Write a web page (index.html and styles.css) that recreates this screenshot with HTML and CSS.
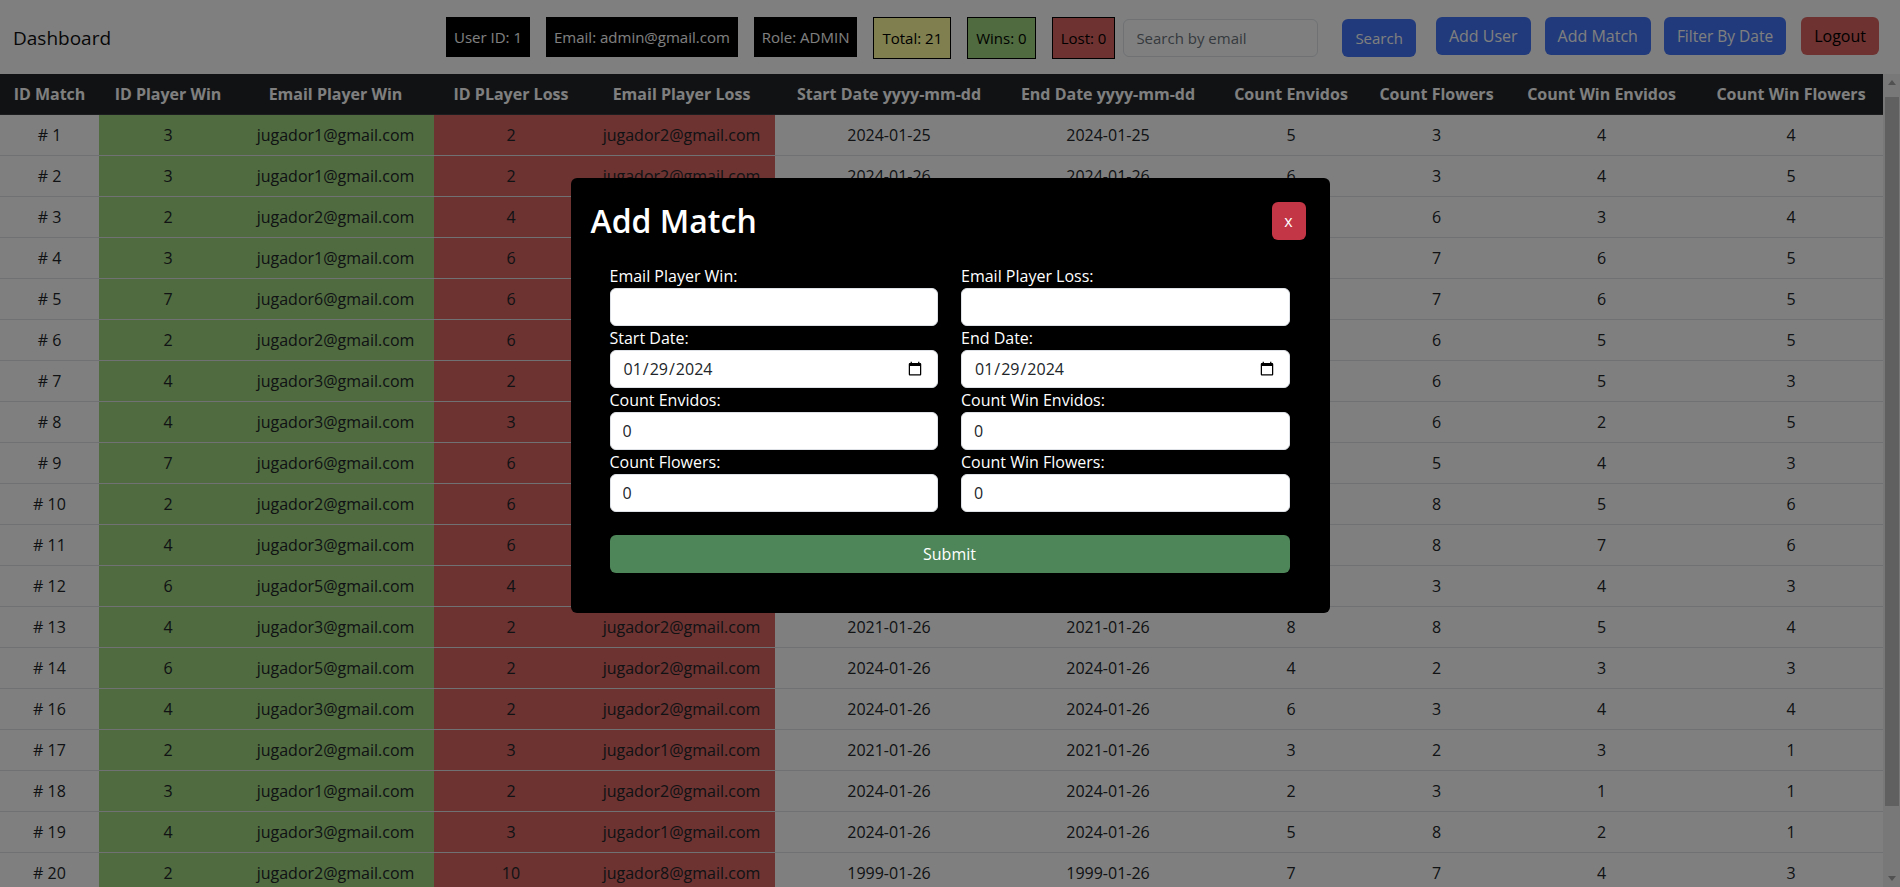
FILE: index.html
```html
<!DOCTYPE html>
<html lang="en">
<head>
<meta charset="utf-8">
<title>Dashboard</title>
<link rel="stylesheet" href="styles.css">
</head>
<body>
<div class="app">
  <nav class="navbar">
    <span class="brand">Dashboard</span>
    <div class="nav-right">
      <span class="tag tag-dark">User ID: 1</span>
      <span class="tag tag-dark">Email: admin@gmail.com</span>
      <span class="tag tag-dark">Role: ADMIN</span>
      <span class="tag tag-total">Total: 21</span>
      <span class="tag tag-win">Wins: 0</span>
      <span class="tag tag-loss">Lost: 0</span>
      <form class="search">
        <input class="search-input" type="text" placeholder="Search by email">
        <button class="btn btn-blue btn-search" type="button">Search</button>
      </form>
      <button class="btn btn-blue btn-adduser" type="button">Add User</button>
      <button class="btn btn-blue btn-addmatch" type="button">Add Match</button>
      <button class="btn btn-blue btn-filter" type="button">Filter By Date</button>
      <button class="btn btn-logout" type="button">Logout</button>
    </div>
  </nav>

  <div class="main">
    <div class="table-wrap">
      <table class="matches">
        <colgroup>
          <col class="c1"><col class="c2"><col class="c3"><col class="c4"><col class="c5"><col class="c6"><col class="c7"><col class="c8"><col class="c9"><col class="c10"><col class="c11">
        </colgroup>
        <thead>
          <tr>
            <th>ID Match</th><th>ID Player Win</th><th>Email Player Win</th><th>ID PLayer Loss</th><th>Email Player Loss</th><th>Start Date yyyy-mm-dd</th><th>End Date yyyy-mm-dd</th><th>Count Envidos</th><th>Count Flowers</th><th>Count Win Envidos</th><th>Count Win Flowers</th>
          </tr>
        </thead>
        <tbody>
          <tr><td># 1</td><td class="win">3</td><td class="win">jugador1@gmail.com</td><td class="loss">2</td><td class="loss">jugador2@gmail.com</td><td>2024-01-25</td><td>2024-01-25</td><td>5</td><td>3</td><td>4</td><td>4</td></tr>
          <tr><td># 2</td><td class="win">3</td><td class="win">jugador1@gmail.com</td><td class="loss">2</td><td class="loss">jugador2@gmail.com</td><td>2024-01-26</td><td>2024-01-26</td><td>6</td><td>3</td><td>4</td><td>5</td></tr>
          <tr><td># 3</td><td class="win">2</td><td class="win">jugador2@gmail.com</td><td class="loss">4</td><td class="loss">jugador3@gmail.com</td><td>2024-01-26</td><td>2024-01-26</td><td>5</td><td>6</td><td>3</td><td>4</td></tr>
          <tr><td># 4</td><td class="win">3</td><td class="win">jugador1@gmail.com</td><td class="loss">6</td><td class="loss">jugador5@gmail.com</td><td>2024-01-26</td><td>2024-01-26</td><td>8</td><td>7</td><td>6</td><td>5</td></tr>
          <tr><td># 5</td><td class="win">7</td><td class="win">jugador6@gmail.com</td><td class="loss">6</td><td class="loss">jugador5@gmail.com</td><td>2024-01-26</td><td>2024-01-26</td><td>7</td><td>7</td><td>6</td><td>5</td></tr>
          <tr><td># 6</td><td class="win">2</td><td class="win">jugador2@gmail.com</td><td class="loss">6</td><td class="loss">jugador5@gmail.com</td><td>2024-01-26</td><td>2024-01-26</td><td>6</td><td>6</td><td>5</td><td>5</td></tr>
          <tr><td># 7</td><td class="win">4</td><td class="win">jugador3@gmail.com</td><td class="loss">2</td><td class="loss">jugador2@gmail.com</td><td>2024-01-26</td><td>2024-01-26</td><td>6</td><td>6</td><td>5</td><td>3</td></tr>
          <tr><td># 8</td><td class="win">4</td><td class="win">jugador3@gmail.com</td><td class="loss">3</td><td class="loss">jugador1@gmail.com</td><td>2024-01-26</td><td>2024-01-26</td><td>5</td><td>6</td><td>2</td><td>5</td></tr>
          <tr><td># 9</td><td class="win">7</td><td class="win">jugador6@gmail.com</td><td class="loss">6</td><td class="loss">jugador5@gmail.com</td><td>2024-01-26</td><td>2024-01-26</td><td>4</td><td>5</td><td>4</td><td>3</td></tr>
          <tr><td># 10</td><td class="win">2</td><td class="win">jugador2@gmail.com</td><td class="loss">6</td><td class="loss">jugador5@gmail.com</td><td>2024-01-26</td><td>2024-01-26</td><td>7</td><td>8</td><td>5</td><td>6</td></tr>
          <tr><td># 11</td><td class="win">4</td><td class="win">jugador3@gmail.com</td><td class="loss">6</td><td class="loss">jugador5@gmail.com</td><td>2024-01-26</td><td>2024-01-26</td><td>8</td><td>8</td><td>7</td><td>6</td></tr>
          <tr><td># 12</td><td class="win">6</td><td class="win">jugador5@gmail.com</td><td class="loss">4</td><td class="loss">jugador3@gmail.com</td><td>2024-01-26</td><td>2024-01-26</td><td>4</td><td>3</td><td>4</td><td>3</td></tr>
          <tr><td># 13</td><td class="win">4</td><td class="win">jugador3@gmail.com</td><td class="loss">2</td><td class="loss">jugador2@gmail.com</td><td>2021-01-26</td><td>2021-01-26</td><td>8</td><td>8</td><td>5</td><td>4</td></tr>
          <tr><td># 14</td><td class="win">6</td><td class="win">jugador5@gmail.com</td><td class="loss">2</td><td class="loss">jugador2@gmail.com</td><td>2024-01-26</td><td>2024-01-26</td><td>4</td><td>2</td><td>3</td><td>3</td></tr>
          <tr><td># 16</td><td class="win">4</td><td class="win">jugador3@gmail.com</td><td class="loss">2</td><td class="loss">jugador2@gmail.com</td><td>2024-01-26</td><td>2024-01-26</td><td>6</td><td>3</td><td>4</td><td>4</td></tr>
          <tr><td># 17</td><td class="win">2</td><td class="win">jugador2@gmail.com</td><td class="loss">3</td><td class="loss">jugador1@gmail.com</td><td>2021-01-26</td><td>2021-01-26</td><td>3</td><td>2</td><td>3</td><td>1</td></tr>
          <tr><td># 18</td><td class="win">3</td><td class="win">jugador1@gmail.com</td><td class="loss">2</td><td class="loss">jugador2@gmail.com</td><td>2024-01-26</td><td>2024-01-26</td><td>2</td><td>3</td><td>1</td><td>1</td></tr>
          <tr><td># 19</td><td class="win">4</td><td class="win">jugador3@gmail.com</td><td class="loss">3</td><td class="loss">jugador1@gmail.com</td><td>2024-01-26</td><td>2024-01-26</td><td>5</td><td>8</td><td>2</td><td>1</td></tr>
          <tr><td># 20</td><td class="win">2</td><td class="win">jugador2@gmail.com</td><td class="loss">10</td><td class="loss">jugador8@gmail.com</td><td>1999-01-26</td><td>1999-01-26</td><td>7</td><td>7</td><td>4</td><td>3</td></tr>
          <tr><td># 21</td><td class="win">3</td><td class="win">jugador1@gmail.com</td><td class="loss">2</td><td class="loss">jugador2@gmail.com</td><td>2024-01-27</td><td>2024-01-27</td><td>5</td><td>4</td><td>3</td><td>2</td></tr>
          <tr><td># 22</td><td class="win">2</td><td class="win">jugador2@gmail.com</td><td class="loss">3</td><td class="loss">jugador1@gmail.com</td><td>2024-01-27</td><td>2024-01-27</td><td>4</td><td>5</td><td>2</td><td>3</td></tr>
        </tbody>
      </table>
    </div>
    <div class="vscroll" aria-hidden="true">
      <span class="vs-btn vs-up"></span>
      <span class="vs-track"><span class="vs-thumb"></span></span>
      <span class="vs-btn vs-down"></span>
    </div>
  </div>
</div>

<div class="backdrop"></div>

<div class="modal-layer">
  <div class="modal">
    <div class="modal-header">
      <h2 class="modal-title">Add Match</h2>
      <button class="btn-close" type="button">x</button>
    </div>
    <form class="modal-body">
      <div class="form-grid">
        <div class="field">
          <label class="field-label">Email Player Win:</label>
          <input class="field-input" type="text">
        </div>
        <div class="field">
          <label class="field-label">Email Player Loss:</label>
          <input class="field-input" type="text">
        </div>
        <div class="field">
          <label class="field-label">Start Date:</label>
          <input class="field-input" type="date" value="2024-01-29">
        </div>
        <div class="field">
          <label class="field-label">End Date:</label>
          <input class="field-input" type="date" value="2024-01-29">
        </div>
        <div class="field">
          <label class="field-label">Count Envidos:</label>
          <input class="field-input" type="number" value="0">
        </div>
        <div class="field">
          <label class="field-label">Count Win Envidos:</label>
          <input class="field-input" type="number" value="0">
        </div>
        <div class="field">
          <label class="field-label">Count Flowers:</label>
          <input class="field-input" type="number" value="0">
        </div>
        <div class="field">
          <label class="field-label">Count Win Flowers:</label>
          <input class="field-input" type="number" value="0">
        </div>
      </div>
      <button class="btn-submit" type="button">Submit</button>
    </form>
  </div>
</div>
</body>
</html>
```

FILE: styles.css
```css
* { box-sizing: border-box; }

html, body {
  margin: 0;
  height: 100%;
  overflow: hidden;
}

body {
  font-family: "Segoe UI", "Open Sans", sans-serif;
  font-size: 16px;
  line-height: 1.5;
  color: #212529;
  background: #ffffff;
}

.app {
  display: flex;
  flex-direction: column;
  height: 100vh;
}

/* ---------- navbar ---------- */
.navbar {
  height: 74px;
  flex: 0 0 74px;
  display: flex;
  align-items: center;
  justify-content: space-between;
  padding: 0 21px 0 13px;
  background: #ffffff;
}

.brand {
  font-size: 19px;
  color: #0f0f0f;
  margin-top: 2px;
}

.nav-right {
  display: flex;
  align-items: center;
}

.tag {
  display: inline-block;
  padding: 8px 8px;
  font-size: 15px;
  line-height: 24px;
  margin-right: 16px;
  white-space: nowrap;
}

.tag-dark {
  background: #000000;
  color: #ffffff;
}

.tag-total,
.tag-win,
.tag-loss {
  border: 1px solid #000000;
  color: #000000;
  margin-top: 2px;
}

.tag-total { background: #fefe9e; }
.tag-win { background: #9ed67e; }
.tag-loss { background: #dc6662; margin-right: 8px; }

.search {
  display: flex;
  align-items: center;
  margin: 2px 20px 0 0;
}

.search-input {
  width: 195px;
  height: 38px;
  padding: 6px 12px;
  border: 1px solid #dee2e6;
  border-radius: 6px;
  font: inherit;
  font-size: 15px;
  color: #212529;
  background: #ffffff;
  margin-right: 24px;
}

.search-input::placeholder { color: #6c757d; }

.btn {
  height: 38px;
  padding: 6px 12px;
  border: 1px solid transparent;
  border-radius: 6px;
  font: inherit;
  line-height: 24px;
  cursor: pointer;
  white-space: nowrap;
}

.btn-blue {
  background: #4274f6;
  color: #ffffff;
}

.btn-search { font-size: 15px; }
.btn-adduser { margin-right: 14px; margin-top: -3px; }
.btn-addmatch { margin-right: 13px; margin-top: -3px; }
.btn-filter { margin-right: 15px; margin-top: -3px; font-size: 15.5px; }

.btn-logout {
  background: #dc6662;
  color: #000000;
  margin-top: -3px;
}

/* ---------- table + scrollbar ---------- */
.main {
  flex: 1 1 auto;
  min-height: 0;
  display: flex;
}

.table-wrap {
  flex: 1 1 auto;
  min-width: 0;
  overflow: hidden;
}

.vscroll {
  flex: 0 0 17px;
  width: 17px;
  display: flex;
  flex-direction: column;
  background: #f1f1f1;
}

.vs-btn {
  flex: 0 0 17px;
  display: flex;
  align-items: center;
  justify-content: center;
}

.vs-up::before {
  content: "";
  border-left: 4.5px solid transparent;
  border-right: 4.5px solid transparent;
  border-bottom: 5px solid #a3a3a3;
}

.vs-down::before {
  content: "";
  border-left: 4.5px solid transparent;
  border-right: 4.5px solid transparent;
  border-top: 5px solid #a3a3a3;
}

.vs-track {
  flex: 1 1 auto;
  padding: 6px 1px 0 2px;
}

.vs-thumb {
  display: block;
  height: 709px;
  background: #c1c1c1;
}

.matches {
  width: 100%;
  border-collapse: collapse;
  table-layout: fixed;
  text-align: center;
}

.c1 { width: 99px; }
.c2 { width: 138px; }
.c3 { width: 197px; }
.c4 { width: 154px; }
.c5 { width: 187px; }
.c6 { width: 228px; }
.c7 { width: 210px; }
.c8 { width: 156px; }
.c9 { width: 135px; }
.c10 { width: 195px; }
.c11 { width: 184px; }

.matches th {
  background: #212529;
  color: #ffffff;
  font-weight: 700;
  padding: 8px;
  line-height: 24px;
  white-space: nowrap;
  border-bottom: 1px solid #373b3e;
}

.matches td {
  padding: 8px;
  line-height: 24px;
  border-bottom: 1px solid #dee2e6;
  background: #ffffff;
  white-space: nowrap;
}

.matches td.win { background: #9ed67e; }
.matches td.loss { background: #da6662; }

/* ---------- modal ---------- */
.backdrop {
  position: fixed;
  inset: 0;
  background: rgba(0, 0, 0, 0.5);
}

.modal-layer {
  position: fixed;
  inset: 0;
  display: flex;
  justify-content: center;
  align-items: flex-start;
  padding-top: 178px;
}

.modal {
  width: 759px;
  background: #000000;
  border-radius: 6px;
  color: #ffffff;
}

.modal-header {
  display: flex;
  justify-content: space-between;
  align-items: center;
  padding: 24px 24px 0 20px;
}

.modal-title {
  margin: 0;
  font-size: 32px;
  font-weight: 600;
  line-height: 38px;
  color: #ffffff;
}

.btn-close {
  width: 34px;
  height: 38px;
  padding: 0;
  border: none;
  border-radius: 6px;
  background: #c23646;
  color: #ffffff;
  font: inherit;
  line-height: 38px;
}

.modal-body {
  padding: 24px 40px 40px 39px;
  margin: 0;
}

.form-grid {
  display: grid;
  grid-template-columns: 1fr 1fr;
  column-gap: 23px;
}

.field-label {
  display: block;
  line-height: 24px;
  color: #ffffff;
}

.field-input {
  display: block;
  width: 100%;
  height: 38px;
  padding: 6px 12px;
  border: 1px solid #dee2e6;
  border-radius: 6px;
  background: #ffffff;
  color: #212529;
  font: inherit;
}

.btn-submit {
  display: block;
  width: 100%;
  height: 38px;
  margin-top: 23px;
  border: none;
  border-radius: 6px;
  background: #4e8659;
  color: #ffffff;
  font: inherit;
}
```
